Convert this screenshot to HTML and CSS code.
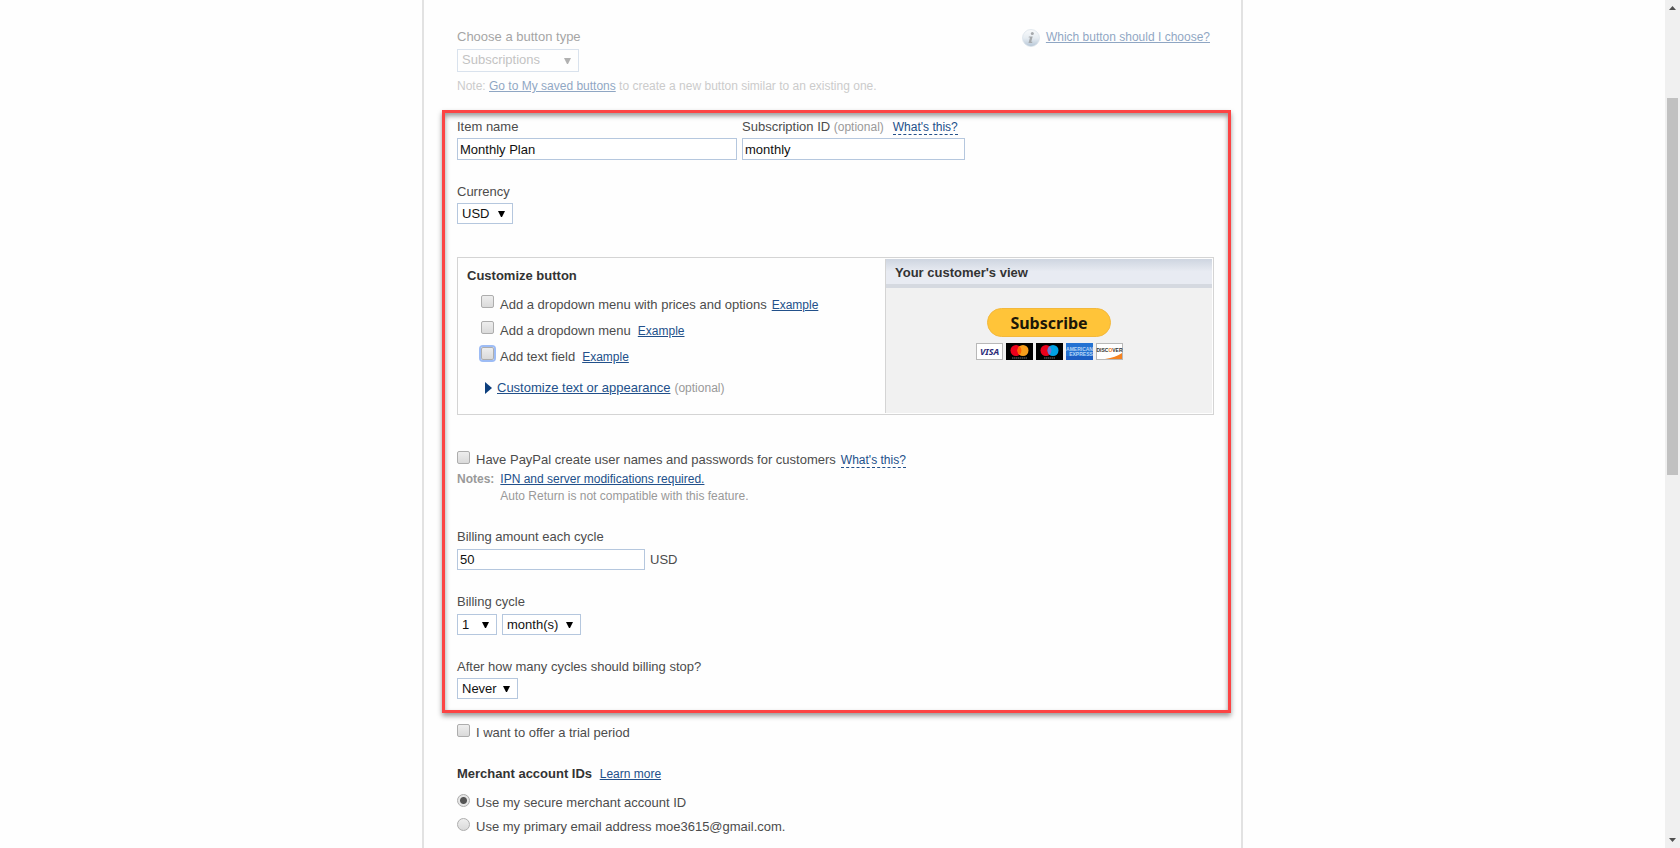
FILE: index.html
```html
<!DOCTYPE html>
<html lang="en">
<head>
<meta charset="utf-8">
<title>Create a PayPal button</title>
<link rel="stylesheet" href="styles.css">
</head>
<body>
<div class="page">
  <main class="column">
    <section class="intro">
      <div class="intro-type">
        <label class="label" for="type">Choose a button type</label>
        <select id="type" class="select select-type" disabled><option>Subscriptions</option></select>
      </div>
      <div class="help">
        <svg class="info" viewBox="0 0 18 18" aria-hidden="true">
          <defs><linearGradient id="ball" x1="0" y1="0" x2="0" y2="1"><stop offset="0" stop-color="#f4f7f9"/><stop offset=".5" stop-color="#d0dce7"/><stop offset="1" stop-color="#6f90b0"/></linearGradient></defs>
          <circle cx="9" cy="9" r="8.5" fill="url(#ball)" stroke="#b5c6d6" stroke-width=".7"/>
          <circle cx="10.3" cy="4.6" r="1.5" fill="#50565c"/>
          <path d="M6.9 7.4h3.8l-1.5 5.4h1.2l-.3 1.2H6.5l1.5-5.4H6.6z" fill="#50565c"/>
        </svg>
        <a href="#">Which button should I choose?</a>
      </div>
      <p class="note">Note: <a href="#">Go to My saved buttons</a> to create a new button similar to an existing one.</p>
    </section>

    <section class="marked">
      <div class="row">
        <div class="field field-name">
          <label class="label" for="item">Item name</label>
          <input id="item" class="text" type="text" value="Monthly Plan">
        </div>
        <div class="field field-id">
          <div class="label"><label for="sub">Subscription ID <span class="hint">(optional)</span></label><a class="dashed spaced" href="#">What's this?</a></div>
          <input id="sub" class="text" type="text" value="monthly">
        </div>
      </div>

      <div class="field">
        <label class="label" for="cur">Currency</label>
        <select id="cur" class="select select-cur"><option>USD</option></select>
      </div>

      <div class="panel">
        <div class="options">
          <h2 class="title">Customize button</h2>
          <div class="check"><input id="o1" type="checkbox"><label for="o1">Add a dropdown menu with prices and options</label><a class="near" href="#">Example</a></div>
          <div class="check"><input id="o2" type="checkbox"><label for="o2">Add a dropdown menu</label><a href="#">Example</a></div>
          <div class="check"><input id="o3" class="focused" type="checkbox"><label for="o3">Add text field</label><a href="#">Example</a></div>
          <div class="more"><svg class="caret" viewBox="0 0 7 12" aria-hidden="true"><path d="M0 0l7 6-7 6z" fill="#0d3f7d"/></svg><a href="#">Customize text or appearance</a><span class="hint">(optional)</span></div>
        </div>
        <div class="preview">
          <h2 class="preview-title">Your customer's view</h2>
          <button class="subscribe" type="button">Subscribe</button>
          <div class="cards">
            <svg viewBox="0 0 27 17" role="img" aria-label="Visa"><rect x=".5" y=".5" width="26" height="16" fill="#fff" stroke="#b8b8b8"/><text x="13.5" y="11.500" class="visa">VISA</text></svg>
            <svg viewBox="0 0 27 17" role="img" aria-label="Mastercard"><rect width="27" height="17" fill="#000"/><circle cx="10" cy="7.5" r="5.5" fill="#eb001b"/><circle cx="17" cy="7.5" r="5.5" fill="#f79e1b"/><path d="M13.5 3.3a5.5 5.5 0 0 1 0 8.4 5.5 5.5 0 0 1 0-8.4z" fill="#ff5f00"/><path d="M6 15h15" stroke="#777" stroke-dasharray="1.5 .5"/></svg>
            <svg viewBox="0 0 27 17" role="img" aria-label="Maestro"><rect width="27" height="17" fill="#000"/><circle cx="10" cy="7.5" r="5.5" fill="#eb001b"/><circle cx="17" cy="7.5" r="5.5" fill="#00a2e5"/><path d="M13.5 3.3a5.5 5.5 0 0 1 0 8.4 5.5 5.5 0 0 1 0-8.4z" fill="#7375cf"/><path d="M8 15h11" stroke="#777" stroke-dasharray="1.5 .5"/></svg>
            <svg viewBox="0 0 27 17" role="img" aria-label="American Express"><rect width="27" height="17" fill="#2472d2"/><rect y="13" width="27" height="4" fill="#1d5fc4"/><text x="13.5" y="8" class="amex">AMERICAN</text><text x="15" y="13" class="amex">EXPRESS</text></svg>
            <svg viewBox="0 0 27 17" role="img" aria-label="Discover"><rect x=".5" y=".5" width="26" height="16" fill="#fff" stroke="#b8b8b8"/><path d="M26 10v6H9c7-1 13-3 17-6z" fill="#f58220"/><text x="13.5" y="9" class="disc">DISC<tspan fill="#f58220">O</tspan>VER</text></svg>
          </div>
        </div>
      </div>

      <div class="check accounts"><input id="acc" type="checkbox"><label for="acc">Have PayPal create user names and passwords for customers</label><a class="dashed near" href="#">What's this?</a></div>
      <div class="notes">
        <strong>Notes:</strong>
        <div><a href="#">IPN and server modifications required.</a><p>Auto Return is not compatible with this feature.</p></div>
      </div>

      <div class="field">
        <label class="label" for="amt">Billing amount each cycle</label>
        <div class="inline"><input id="amt" class="text text-amt" type="text" value="50"><span>USD</span></div>
      </div>
      <div class="field">
        <label class="label" for="cyc">Billing cycle</label>
        <div class="inline"><select id="cyc" class="select select-num"><option>1</option></select><select class="select select-unit" aria-label="Cycle unit"><option>month(s)</option></select></div>
      </div>
      <div class="field">
        <label class="label" for="stop">After how many cycles should billing stop?</label>
        <select id="stop" class="select select-stop"><option>Never</option></select>
      </div>
    </section>

    <div class="check trial"><input id="trial" type="checkbox"><label for="trial">I want to offer a trial period</label></div>
    <section class="merchant">
      <h2 class="title">Merchant account IDs <a href="#">Learn more</a></h2>
      <div class="check"><input id="m1" type="radio" name="m" checked><label for="m1">Use my secure merchant account ID</label></div>
      <div class="check"><input id="m2" type="radio" name="m"><label for="m2">Use my primary email address moe3615@gmail.com.</label></div>
    </section>
  </main>
</div>
<div class="scroll" aria-hidden="true">
  <svg viewBox="0 0 7 4"><path d="M3.5 0L7 4H0z" fill="#505050"/></svg>
  <div class="track"><div class="thumb"></div></div>
  <svg viewBox="0 0 7 4"><path d="M0 0h7L3.5 4z" fill="#505050"/></svg>
</div>
</body>
</html>
```
FILE: styles.css
```css
* { box-sizing: border-box; }
body {
  margin: 0;
  display: flex;
  background: #fefefe;
  color: #4c4c4c;
  font: 13px/20px "Liberation Sans", Arial, sans-serif;
}
h2, p { margin: 0; font-size: inherit; }
a { color: #22508a; font-size: 12px; }
input, select, button { margin: 0; font-family: inherit; }

.page { flex: 1; display: flex; justify-content: center; }
.column {
  width: 821px;
  min-height: 100vh;
  padding: 27px 24px 8px 33px;
  border: solid #e2e2e2;
  border-width: 0 2px;
}

.intro { display: flex; flex-wrap: wrap; justify-content: space-between; opacity: .5; padding-right: 7px; margin-bottom: 15px; }
.help { display: flex; gap: 6px; }
.info { width: 18px; height: 18px; margin-top: 2px; }
.note { width: 100%; margin-top: 5px; font-size: 12px; line-height: 18px; color: #999; }

.label { display: block; }
.hint { color: #999; font-size: 12px; }
.dashed { text-decoration: none; border-bottom: 1px dashed #22508a; line-height: 14px; }
.spaced { margin-left: 9px; }

.text, .select {
  display: block;
  border: 1px solid #b5c7de;
  border-radius: 0;
  background-color: #fff;
  color: #111;
  font-size: 13px;
}
.text { width: 100%; height: 22px; margin-top: 1px; padding: 0 2px; }
.select {
  appearance: none;
  height: 21px;
  margin-top: 1px;
  padding: 0 0 0 4px;
  background: #fff url("data:image/svg+xml,%3Csvg xmlns='http://www.w3.org/2000/svg' width='7' height='6'%3E%3Cpath d='M0 0h7L4 6H3z'/%3E%3C/svg%3E") no-repeat right 7px center;
}
.select-type { width: 122px; height: 23px; margin-top: 2px; padding-bottom: 2px; opacity: 1; }
.select-type:disabled {
  color: #888;
  background-image: url("data:image/svg+xml,%3Csvg xmlns='http://www.w3.org/2000/svg' width='7' height='6'%3E%3Cpath fill='%23666' d='M0 0h7L4 6H3z'/%3E%3C/svg%3E");
}
.select-cur { width: 56px; }
.select-num { width: 40px; }
.select-unit { width: 79px; }
.select-stop { width: 61px; }

.marked {
  margin: 0 -14px 0 -15px;
  padding: 4px 14px 11px 12px;
  border: 3px solid #fc4444;
  box-shadow: 0 3px 5px rgba(0, 0, 0, .4), inset 0 3px 5px rgba(0, 0, 0, .4);
}
.row { display: flex; gap: 5px; }
.field { margin-bottom: 22px; }
.field:last-child { margin-bottom: 0; }
.field-name { flex: 0 1 280px; }
.field-id { flex: 0 1 223px; }
.inline { display: flex; gap: 5px; margin-top: 2px; line-height: 21px; }
.inline .text, .inline .select { margin-top: 0; }
.inline .text-amt { width: 188px; height: 21px; }

.panel { display: flex; margin-top: 33px; padding-right: 1px; border: 1px solid #d4d4d4; }
.options { flex: 1; padding: 8px 9px 16px; }
.title { color: #333; font-weight: bold; }
.title a { margin-left: 4px; font-weight: normal; }
.options .check { margin: 4px 0 0 14px; line-height: 22px; }
.options .check:first-of-type { margin-top: 8px; }
.more { display: flex; align-items: center; margin: 10px 0 0 18px; }
.more a { font-size: 13px; }
.caret { width: 7px; height: 12px; margin-right: 5px; }
.more .hint { margin-left: 4px; }

.check { display: flex; }
.check a { margin-left: 7px; }
.check a.near { margin-left: 5px; }
.check input {
  appearance: none;
  flex: none;
  width: 13px;
  height: 13px;
  margin: 1px 6px 0 0;
  border: 1px solid #adadad;
  border-radius: 2px;
  background: linear-gradient(#eee, #dadada);
}
.check input[type="radio"] { border-radius: 50%; }
.check input:checked { background: radial-gradient(circle, #555 3px, #e6e6e6 4px); }
.check .focused { box-shadow: 0 0 0 2px #9dbcf5; }

.preview { flex: 0 0 327px; display: flex; flex-direction: column; align-items: center; margin: 1px 0; border-left: 1px solid #d4d4d4; background: #f1f1f1; }
.preview-title {
  align-self: stretch;
  height: 29px;
  padding: 4px 9px;
  border-bottom: 4px solid #d5d9e0;
  background: linear-gradient(#ced5e0, #e8ebf2 50%);
  color: #333;
}
.subscribe {
  width: 124px;
  height: 29px;
  margin: 20px 0 6px;
  padding: 0;
  border: 1px solid #f3b83c;
  border-radius: 15px;
  background: #ffc439;
  color: #1c1708;
  font: bold 16px "Noto Sans", sans-serif;
}
.cards { display: flex; gap: 3px; }
.cards svg { width: 27px; height: 17px; }
.cards text { font-family: "Liberation Sans", sans-serif; font-weight: bold; text-anchor: middle; }
.cards .visa { font-size: 9px; font-style: italic; font-family: "Noto Sans", sans-serif; fill: #2a2a78; }
.amex { font-size: 5px; fill: #b5d4f5; }
.disc { font-size: 5px; fill: #333; }

.accounts { margin-top: 35px; }
.dashed.near { align-self: flex-start; margin-top: 3px; }
.notes { display: flex; gap: 6px; margin: 1px 0 22px; color: #999; font-size: 12px; line-height: 17px; }
.trial { margin-top: 10px; }
.merchant { margin-top: 21px; }
.merchant .check { margin-top: 4px; }
.merchant .title + .check { margin-top: 9px; }

.scroll { position: sticky; top: 0; display: flex; flex-direction: column; align-items: center; width: 15px; height: 100vh; padding: 6px 0; background: #f0f0f0; }
.scroll svg { width: 7px; height: 4px; }
.track { flex: 1; width: 11px; padding-top: 88px; }
.thumb { height: 51%; background: #c1c1c1; }
```
